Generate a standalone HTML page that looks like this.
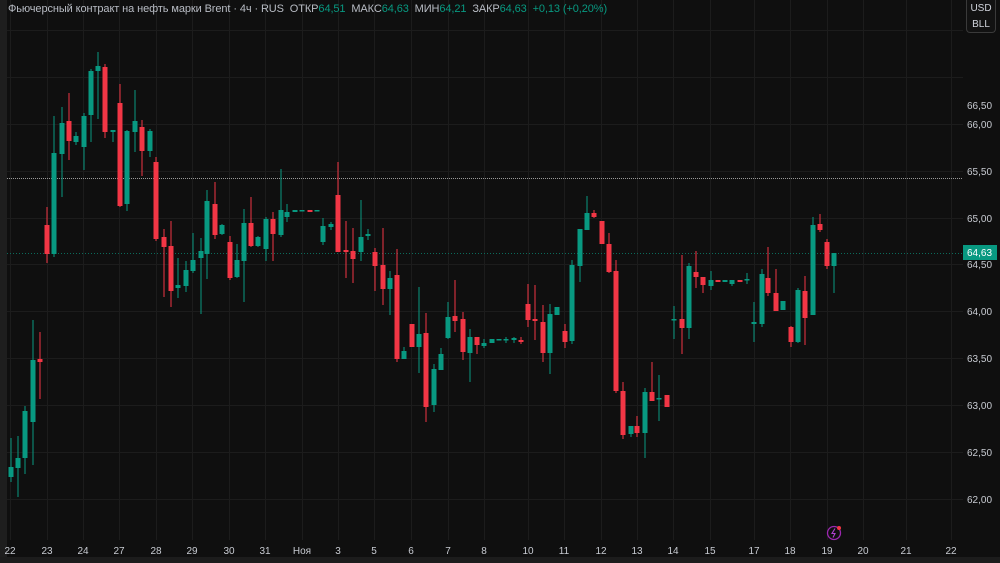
<!DOCTYPE html>
<html><head><meta charset="utf-8"><style>
html,body{margin:0;padding:0;background:#0f0f0f;}
body{width:1000px;height:563px;overflow:hidden;position:relative;font-family:"Liberation Sans","DejaVu Sans",sans-serif;}
.t{position:absolute;left:8px;top:3px;font-size:11px;color:#b8bcc4;white-space:nowrap;letter-spacing:-0.1px}
.t .g{color:#089981}
.cur{position:absolute;left:966px;top:0;width:30px;height:33px;border:1px solid #3a3a3a;border-top:none;border-radius:0 0 4px 4px;background:#121212;font-size:10px;color:#d1d4dc;text-align:center;line-height:16px;box-sizing:border-box;padding-top:1px}
</style></head><body>
<svg width="1000" height="563" style="position:absolute;left:0;top:0" font-family="Liberation Sans, sans-serif">
<rect x="0" y="0" width="1000" height="563" fill="#0f0f0f"/>
<rect x="0" y="0" width="7" height="563" fill="#1e1e1e"/>
<rect x="0" y="557" width="1000" height="6" fill="#1c1c1c"/>
<g stroke="#1c1c1c" stroke-width="1">
<line x1="7" y1="30.5" x2="963" y2="30.5"/>
<line x1="7" y1="77.5" x2="963" y2="77.5"/>
<line x1="7" y1="124.5" x2="963" y2="124.5"/>
<line x1="7" y1="171.5" x2="963" y2="171.5"/>
<line x1="7" y1="218.5" x2="963" y2="218.5"/>
<line x1="7" y1="264.5" x2="963" y2="264.5"/>
<line x1="7" y1="311.5" x2="963" y2="311.5"/>
<line x1="7" y1="358.5" x2="963" y2="358.5"/>
<line x1="7" y1="405.5" x2="963" y2="405.5"/>
<line x1="7" y1="452.5" x2="963" y2="452.5"/>
<line x1="7" y1="499.5" x2="963" y2="499.5"/>
<line x1="10.5" y1="0" x2="10.5" y2="540"/><line x1="47.5" y1="0" x2="47.5" y2="540"/><line x1="83.5" y1="0" x2="83.5" y2="540"/><line x1="119.5" y1="0" x2="119.5" y2="540"/><line x1="156.5" y1="0" x2="156.5" y2="540"/><line x1="192.5" y1="0" x2="192.5" y2="540"/><line x1="229.5" y1="0" x2="229.5" y2="540"/><line x1="265.5" y1="0" x2="265.5" y2="540"/><line x1="302.5" y1="0" x2="302.5" y2="540"/><line x1="338.5" y1="0" x2="338.5" y2="540"/><line x1="374.5" y1="0" x2="374.5" y2="540"/><line x1="411.5" y1="0" x2="411.5" y2="540"/><line x1="448.5" y1="0" x2="448.5" y2="540"/><line x1="484.5" y1="0" x2="484.5" y2="540"/><line x1="528.5" y1="0" x2="528.5" y2="540"/><line x1="564.5" y1="0" x2="564.5" y2="540"/><line x1="601.5" y1="0" x2="601.5" y2="540"/><line x1="637.5" y1="0" x2="637.5" y2="540"/><line x1="673.5" y1="0" x2="673.5" y2="540"/><line x1="710.5" y1="0" x2="710.5" y2="540"/><line x1="754.5" y1="0" x2="754.5" y2="540"/><line x1="790.5" y1="0" x2="790.5" y2="540"/><line x1="827.5" y1="0" x2="827.5" y2="540"/><line x1="863.5" y1="0" x2="863.5" y2="540"/><line x1="906.5" y1="0" x2="906.5" y2="540"/><line x1="951.5" y1="0" x2="951.5" y2="540"/>
</g>
<line x1="7" y1="178.5" x2="963" y2="178.5" stroke="#9a9a9a" stroke-width="1" stroke-dasharray="1,1"/>
<line x1="7" y1="253.5" x2="963" y2="253.5" stroke="#0b6b5b" stroke-width="1" stroke-dasharray="1,2"/>
<g id="c">
<!-- green -->
<g fill="#089981">
<rect x="10.5" y="438" width="1" height="44"/><rect x="8.5" y="467" width="5" height="10"/>
<rect x="17.5" y="436" width="1" height="61"/><rect x="15.5" y="458" width="5" height="10"/>
<rect x="24.5" y="406" width="1" height="68"/><rect x="22.5" y="411" width="5" height="47"/>
<rect x="32.5" y="320" width="1" height="145"/><rect x="30.5" y="360" width="5" height="62"/>
<rect x="53.5" y="116" width="1" height="141"/><rect x="51.5" y="153" width="5" height="101"/>
<rect x="61.5" y="107" width="1" height="90"/><rect x="59.5" y="123" width="5" height="31"/>
<rect x="75.5" y="132" width="1" height="13"/><rect x="73.5" y="136" width="5" height="6"/>
<rect x="83.5" y="113" width="1" height="57"/><rect x="81.5" y="116" width="5" height="31"/>
<rect x="90.5" y="69" width="1" height="73"/><rect x="88.5" y="71" width="5" height="44"/>
<rect x="97.5" y="52" width="1" height="67"/><rect x="95.5" y="66" width="5" height="5"/>
<rect x="112.5" y="130" width="1" height="12"/><rect x="110.5" y="130" width="5" height="2"/>
<rect x="126.5" y="130" width="1" height="81"/><rect x="124.5" y="131" width="5" height="73"/>
<rect x="134.5" y="90" width="1" height="62"/><rect x="132.5" y="121" width="5" height="11"/>
<rect x="149.5" y="129" width="1" height="28"/><rect x="147.5" y="131" width="5" height="20"/>
<rect x="177.5" y="258" width="1" height="40"/><rect x="175.5" y="285" width="5" height="3"/>
<rect x="185.5" y="261" width="1" height="31"/><rect x="183.5" y="270" width="5" height="16"/>
<rect x="192.5" y="233" width="1" height="40"/><rect x="190.5" y="260" width="5" height="11"/>
<rect x="200.5" y="238" width="1" height="76"/><rect x="198.5" y="251" width="5" height="7"/>
<rect x="206.5" y="190" width="1" height="89"/><rect x="204.5" y="201" width="5" height="53"/>
<rect x="221.5" y="224" width="1" height="11"/><rect x="219.5" y="225" width="5" height="9"/>
<rect x="236.5" y="244" width="1" height="34"/><rect x="234.5" y="260" width="5" height="17"/>
<rect x="243.5" y="209" width="1" height="93"/><rect x="241.5" y="223" width="5" height="38"/>
<rect x="257.5" y="236" width="1" height="11"/><rect x="255.5" y="237" width="5" height="9"/>
<rect x="265.5" y="217" width="1" height="44"/><rect x="263.5" y="219" width="5" height="30"/>
<rect x="280.5" y="169" width="1" height="68"/><rect x="278.5" y="210" width="5" height="25"/>
<rect x="286.5" y="204" width="1" height="18"/><rect x="284.5" y="212" width="5" height="5"/>
<rect x="292.5" y="210" width="5" height="2"/><rect x="299.5" y="210" width="5" height="1.5"/><rect x="314.5" y="210" width="5" height="1.5"/>
<rect x="322.5" y="218" width="1" height="27"/><rect x="320.5" y="226" width="5" height="16"/>
<rect x="330.5" y="222" width="1" height="8"/><rect x="328.5" y="224" width="5" height="3"/>
<rect x="360.5" y="200" width="1" height="61"/><rect x="358.5" y="237" width="5" height="15"/>
<rect x="367.5" y="229" width="1" height="11"/><rect x="365.5" y="234" width="5" height="2"/>
<rect x="389.5" y="271" width="1" height="44"/><rect x="387.5" y="278" width="5" height="11"/>
<rect x="403.5" y="347" width="1" height="12"/><rect x="401.5" y="351" width="5" height="8"/>
<rect x="418.5" y="287" width="1" height="86"/><rect x="416.5" y="334" width="5" height="13"/>
<rect x="433.5" y="364" width="1" height="48"/><rect x="431.5" y="369" width="5" height="36"/>
<rect x="440.5" y="348" width="1" height="22"/><rect x="438.5" y="354" width="5" height="16"/>
<rect x="447.5" y="302" width="1" height="37"/><rect x="445.5" y="317" width="5" height="21"/>
<rect x="469.5" y="329" width="1" height="53"/><rect x="467.5" y="337" width="5" height="16"/>
<rect x="483.5" y="339" width="1" height="9"/><rect x="481.5" y="343" width="5" height="3"/>
<rect x="489.5" y="339" width="5" height="4"/><rect x="496.5" y="339" width="5" height="1.5"/>
<rect x="505.5" y="337" width="1" height="6"/><rect x="503.5" y="339" width="5" height="1.5"/>
<rect x="513.5" y="337" width="1" height="6"/><rect x="511.5" y="338" width="5" height="2"/>
<rect x="549.5" y="304" width="1" height="70"/><rect x="547.5" y="314" width="5" height="39"/>
<rect x="554.5" y="307" width="5" height="8"/>
<rect x="571.5" y="260" width="1" height="84"/><rect x="569.5" y="265" width="5" height="76"/>
<rect x="579.5" y="229" width="1" height="53"/><rect x="577.5" y="229" width="5" height="37"/>
<rect x="586.5" y="196" width="1" height="34"/><rect x="584.5" y="213" width="5" height="17"/>
<rect x="630.5" y="426" width="1" height="11"/><rect x="628.5" y="426" width="5" height="8"/>
<rect x="644.5" y="388" width="1" height="70"/><rect x="642.5" y="392" width="5" height="41"/>
<rect x="658.5" y="375" width="1" height="46"/><rect x="656.5" y="398" width="5" height="1.5"/>
<rect x="673.5" y="306" width="1" height="33"/><rect x="671.5" y="319" width="5" height="1.5"/>
<rect x="688.5" y="263" width="1" height="76"/><rect x="686.5" y="266" width="5" height="62"/>
<rect x="710.5" y="271" width="1" height="19"/><rect x="708.5" y="280" width="5" height="6"/>
<rect x="722.5" y="280" width="5" height="2"/>
<rect x="731.5" y="280" width="1" height="6"/><rect x="729.5" y="280" width="5" height="4"/>
<rect x="746.5" y="273" width="1" height="11"/><rect x="744.5" y="279" width="5" height="1.5"/>
<rect x="753.5" y="302" width="1" height="40"/><rect x="751.5" y="322" width="5" height="2"/>
<rect x="761.5" y="269" width="1" height="58"/><rect x="759.5" y="274" width="5" height="50"/>
<rect x="780.5" y="301" width="5" height="9"/>
<rect x="797.5" y="288" width="1" height="55"/><rect x="795.5" y="290" width="5" height="52"/>
<rect x="812.5" y="217" width="1" height="98"/><rect x="810.5" y="225" width="5" height="90"/>
<rect x="833.5" y="253" width="1" height="40"/><rect x="831.5" y="253" width="5" height="13"/>
</g>
<g fill="#f23645">
<rect x="39.5" y="332" width="1" height="67"/><rect x="37.5" y="359" width="5" height="3"/>
<rect x="46.5" y="207" width="1" height="56"/><rect x="44.5" y="225" width="5" height="29"/>
<rect x="68.5" y="93" width="1" height="67"/><rect x="66.5" y="121" width="5" height="20"/>
<rect x="104.5" y="64" width="1" height="74"/><rect x="102.5" y="67" width="5" height="65"/>
<rect x="119.5" y="84" width="1" height="123"/><rect x="117.5" y="103" width="5" height="103"/>
<rect x="141.5" y="120" width="1" height="56"/><rect x="139.5" y="127" width="5" height="24"/>
<rect x="155.5" y="157" width="1" height="84"/><rect x="153.5" y="162" width="5" height="77"/>
<rect x="163.5" y="229" width="1" height="68"/><rect x="161.5" y="237" width="5" height="10"/>
<rect x="170.5" y="221" width="1" height="86"/><rect x="168.5" y="246" width="5" height="45"/>
<rect x="214.5" y="182" width="1" height="57"/><rect x="212.5" y="204" width="5" height="31"/>
<rect x="229.5" y="236" width="1" height="44"/><rect x="227.5" y="242" width="5" height="36"/>
<rect x="250.5" y="197" width="1" height="50"/><rect x="248.5" y="223" width="5" height="23"/>
<rect x="272.5" y="212" width="1" height="49"/><rect x="270.5" y="219" width="5" height="15"/>
<rect x="307.5" y="210" width="5" height="2"/>
<rect x="337.5" y="162" width="1" height="90"/><rect x="335.5" y="195" width="5" height="57"/>
<rect x="345.5" y="221" width="1" height="57"/><rect x="343.5" y="250" width="5" height="2"/>
<rect x="352.5" y="228" width="1" height="55"/><rect x="350.5" y="251" width="5" height="8"/>
<rect x="374.5" y="248" width="1" height="43"/><rect x="372.5" y="252" width="5" height="14"/>
<rect x="382.5" y="228" width="1" height="77"/><rect x="380.5" y="265" width="5" height="24"/>
<rect x="396.5" y="249" width="1" height="113"/><rect x="394.5" y="275" width="5" height="84"/>
<rect x="409.5" y="324" width="5" height="23"/><rect x="411.5" y="324" width="1" height="23"/>
<rect x="425.5" y="313" width="1" height="109"/><rect x="423.5" y="333" width="5" height="74"/>
<rect x="454.5" y="280" width="1" height="52"/><rect x="452.5" y="316" width="5" height="5"/>
<rect x="462.5" y="312" width="1" height="48"/><rect x="460.5" y="319" width="5" height="33"/>
<rect x="476.5" y="337" width="1" height="17"/><rect x="474.5" y="337" width="5" height="8"/>
<rect x="520.5" y="337" width="1" height="7"/><rect x="518.5" y="340" width="5" height="2"/>
<rect x="527.5" y="284" width="1" height="43"/><rect x="525.5" y="304" width="5" height="16"/>
<rect x="534.5" y="285" width="1" height="55"/><rect x="532.5" y="319" width="5" height="2"/>
<rect x="542.5" y="305" width="1" height="57"/><rect x="540.5" y="322" width="5" height="31"/>
<rect x="564.5" y="324" width="1" height="24"/><rect x="562.5" y="331" width="5" height="11"/>
<rect x="593.5" y="210" width="1" height="8"/><rect x="591.5" y="213" width="5" height="4"/>
<rect x="599.5" y="221" width="5" height="23"/>
<rect x="608.5" y="233" width="1" height="40"/><rect x="606.5" y="244" width="5" height="28"/>
<rect x="615.5" y="260" width="1" height="133"/><rect x="613.5" y="271" width="5" height="120"/>
<rect x="622.5" y="382" width="1" height="57"/><rect x="620.5" y="391" width="5" height="44"/>
<rect x="636.5" y="416" width="1" height="21"/><rect x="634.5" y="426" width="5" height="7"/>
<rect x="651.5" y="362" width="1" height="39"/><rect x="649.5" y="392" width="5" height="9"/>
<rect x="664.5" y="395" width="5" height="12"/>
<rect x="681.5" y="255" width="1" height="99"/><rect x="679.5" y="319" width="5" height="9"/>
<rect x="695.5" y="251" width="1" height="37"/><rect x="693.5" y="272" width="5" height="5"/>
<rect x="702.5" y="277" width="1" height="16"/><rect x="700.5" y="277" width="5" height="8"/>
<rect x="715.5" y="280" width="5" height="2"/><rect x="737.5" y="280" width="5" height="2"/>
<rect x="767.5" y="247" width="1" height="49"/><rect x="765.5" y="278" width="5" height="15"/>
<rect x="775.5" y="269" width="1" height="42"/><rect x="773.5" y="293" width="5" height="18"/>
<rect x="790.5" y="326" width="1" height="21"/><rect x="788.5" y="327" width="5" height="15"/>
<rect x="804.5" y="276" width="1" height="69"/><rect x="802.5" y="291" width="5" height="27"/>
<rect x="819.5" y="214" width="1" height="18"/><rect x="817.5" y="224" width="5" height="6"/>
<rect x="826.5" y="239" width="1" height="30"/><rect x="824.5" y="242" width="5" height="24"/>
</g>
</g>
<g font-size="10" fill="#c8cbd2" text-anchor="start">
<text x="967" y="109">66,50</text>
<text x="967" y="128">66,00</text>
<text x="967" y="175">65,50</text>
<text x="967" y="222">65,00</text>
<text x="967" y="268">64,50</text>
<text x="967" y="315">64,00</text>
<text x="967" y="362">63,50</text>
<text x="967" y="409">63,00</text>
<text x="967" y="456">62,50</text>
<text x="967" y="503">62,00</text>
</g>
<rect x="963" y="245" width="34" height="15" fill="#089981"/>
<text x="967" y="256" font-size="10" fill="#ffffff">64,63</text>
<g font-size="10" fill="#c8cbd2" text-anchor="middle">
<text x="10" y="554">22</text><text x="47" y="554">23</text><text x="83" y="554">24</text><text x="119" y="554">27</text><text x="156" y="554">28</text><text x="192" y="554">29</text><text x="229" y="554">30</text><text x="265" y="554">31</text><text x="302" y="554">Ноя</text><text x="338" y="554">3</text><text x="374" y="554">5</text><text x="411" y="554">6</text><text x="448" y="554">7</text><text x="484" y="554">8</text><text x="528" y="554">10</text><text x="564" y="554">11</text><text x="601" y="554">12</text><text x="637" y="554">13</text><text x="673" y="554">14</text><text x="710" y="554">15</text><text x="754" y="554">17</text><text x="790" y="554">18</text><text x="827" y="554">19</text><text x="863" y="554">20</text><text x="906" y="554">21</text><text x="951" y="554">22</text>
</g>
<circle cx="834" cy="533" r="6.5" fill="none" stroke="#9c27b0" stroke-width="1.3"/>
<path d="M835 528.5 L832 533.5 L835 533.5 L833 537.5" fill="none" stroke="#b040d0" stroke-width="1.1"/>
<circle cx="839" cy="528" r="2" fill="#f23645"/>
</svg>
<div class="t">Фьючерсный контракт на нефть марки Brent · 4ч · RUS &nbsp;ОТКР<span class="g">64,51</span> &nbsp;МАКС<span class="g">64,63</span> &nbsp;МИН<span class="g">64,21</span> &nbsp;ЗАКР<span class="g">64,63</span> &nbsp;<span class="g">+0,13 (+0,20%)</span></div>
<div class="cur">USD<br>BLL</div>
</body></html>
